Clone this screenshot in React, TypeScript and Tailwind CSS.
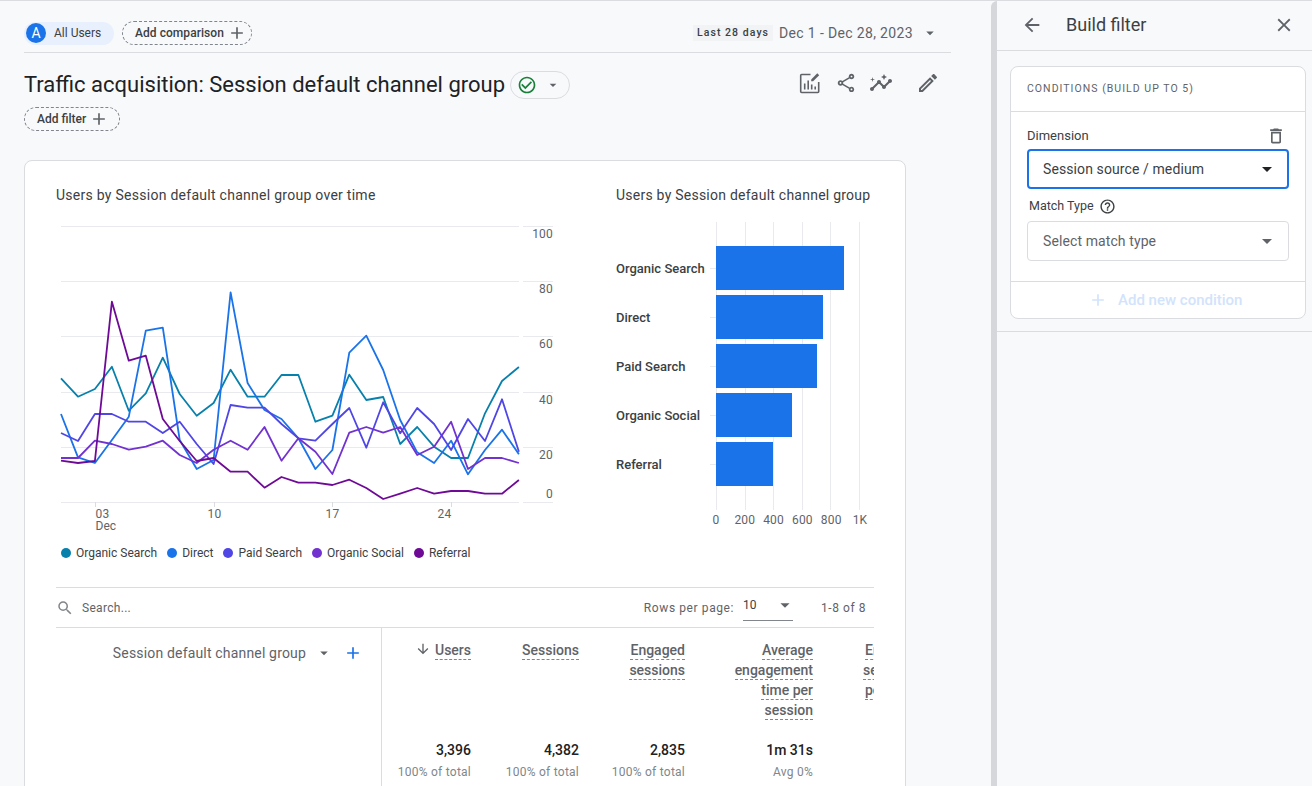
import React from "react";
import {
  MdAdd,
  MdArrowBack,
  MdArrowDownward,
  MdArrowDropDown,
  MdCheckCircleOutline,
  MdClose,
  MdDeleteOutline,
  MdHelpOutline,
  MdOutlineEdit,
  MdOutlineInsights,
  MdOutlineShare,
  MdSearch,
} from "react-icons/md";

const font = "font-['Roboto',sans-serif]";

const xAt = (i: number) => 61 + i * 16.96;
const yAt = (z: number) => 220 + z / 3;

const series = [
  {
    name: "Organic Search",
    color: "#0880ac",
    z: [475, 530, 507, 440, 572, 520, 413, 522, 587, 549, 449, 530, 530, 465, 465, 605, 587, 464, 540, 531, 672, 621, 680, 714, 714, 580, 483, 441],
  },
  {
    name: "Direct",
    color: "#1a73e8",
    z: [582, 712, 729, 660, 590, 332, 323, 660, 747, 720, 217, 489, 570, 597, 655, 747, 690, 398, 347, 450, 600, 697, 729, 662, 763, 690, 629, 703],
  },
  {
    name: "Paid Search",
    color: "#4f46e5",
    z: [639, 663, 582, 582, 605, 605, 639, 605, 672, 732, 555, 563, 563, 612, 655, 662, 612, 564, 683, 547, 640, 564, 612, 690, 597, 663, 538, 695],
  },
  {
    name: "Organic Social",
    color: "#7232cf",
    z: [714, 714, 662, 672, 689, 680, 662, 705, 729, 689, 662, 689, 621, 722, 655, 695, 762, 638, 621, 638, 621, 705, 680, 605, 747, 714, 714, 729],
  },
  {
    name: "Referral",
    color: "#6f0a96",
    z: [722, 729, 723, 245, 422, 407, 597, 663, 723, 714, 755, 755, 803, 771, 788, 788, 795, 779, 804, 837, 821, 804, 821, 813, 813, 821, 821, 780],
  },
];

const gridYs = [226, 281, 336, 392, 447, 502];
const yLabels = ["100", "80", "60", "40", "20", "0"];
const yLabelYs = [238, 293, 348, 404, 459, 498];
const ticks = [
  { x: 95.5, label: "03", anchor: "start" },
  { x: 214.5, label: "10", anchor: "middle" },
  { x: 332.5, label: "17", anchor: "middle" },
  { x: 451.5, label: "24", anchor: "end" },
];

const LineChart = () => (
  <svg width="520" height="310" viewBox="56 222 520 310" className="block">
    {gridYs.map((y) => (
      <g key={y}>
        <line x1="61" x2="519" y1={y + 0.5} y2={y + 0.5} stroke="#e8eaed" />
        <line x1="523" x2="553" y1={y + 0.5} y2={y + 0.5} stroke="#e8eaed" />
      </g>
    ))}
    {ticks.map((t) => (
      <g key={t.label}>
        <line x1={t.x} x2={t.x} y1="502" y2="507" stroke="#dadce0" />
        <text x={t.x} y="518" fontSize="12" textAnchor={t.anchor as "start"} fill="#5f6368" fontFamily="Roboto" letterSpacing="0.2">
          {t.label}
        </text>
      </g>
    ))}
    <text x="95.5" y="530" fontSize="12" fill="#5f6368" fontFamily="Roboto">
      Dec
    </text>
    {yLabels.map((l, i) => (
      <text key={l} x="553" y={yLabelYs[i]} fontSize="12" textAnchor="end" fill="#5f6368" fontFamily="Roboto" letterSpacing="0.2">
        {l}
      </text>
    ))}
    {series.map((s) => (
      <polyline
        key={s.name}
        fill="none"
        stroke={s.color}
        strokeWidth="1.8"
        strokeLinejoin="round"
        points={s.z.map((v, i) => `${xAt(i).toFixed(1)},${yAt(v).toFixed(1)}`).join(" ")}
      />
    ))}
  </svg>
);

const bars = [
  { label: "Organic Search", w: 128 },
  { label: "Direct", w: 107 },
  { label: "Paid Search", w: 101 },
  { label: "Organic Social", w: 76 },
  { label: "Referral", w: 57 },
];

const BarChart = () => (
  <div className="relative mt-[17px] h-[306px] w-[254px]">
    <div className="absolute left-[100px] top-0 flex h-[288px] w-[144px] justify-between">
      {[0, 1, 2, 3, 4, 5].map((i) => (
        <div key={i} className="w-px bg-[#e8eaed]" />
      ))}
    </div>
    <div className="absolute inset-x-0 top-[24px] flex flex-col gap-[5px]">
      {bars.map((b) => (
        <div key={b.label} className="flex h-[44px] items-center">
          <span className="mt-[1px] w-[94px] whitespace-nowrap text-[13px] font-medium leading-4 text-[#3c4043]">{b.label}</span>
          <span className="h-px w-[6px] bg-[#e8eaed]" />
          <div className="h-full bg-[#1a73e8]" style={{ width: b.w }} />
        </div>
      ))}
    </div>
    <div className="absolute bottom-0 left-[92px] flex w-[160px] justify-between text-xs leading-4 tracking-[0.2px] text-[#5f6368]">
      {["0", "200", "400", "600", "800", "1K"].map((l) => (
        <span key={l} className="flex w-[16px] justify-center whitespace-nowrap">
          {l}
        </span>
      ))}
    </div>
  </div>
);

const Dashed = ({ children }: { children: React.ReactNode }) => (
  <span className="inline-block self-start border-b border-dashed border-[#80868b] leading-[18px]">{children}</span>
);

const columns = [
  { lines: ["Sessions"], total: "4,382", sub: "100% of total", w: "w-[108px]" },
  { lines: ["Engaged", "sessions"], total: "2,835", sub: "100% of total", w: "w-[106px]" },
  { lines: ["Average", "engagement", "time per", "session"], total: "1m 31s", sub: "Avg 0%", w: "w-[128px]" },
];

const ReportIcon = () => (
  <svg width="22" height="22" viewBox="0 0 22 22" fill="none" stroke="#5f6368" strokeWidth="1.6">
    <path d="M11.5 2.5H2.6a.9.9 0 0 0-.9.9v16.2c0 .5.4.9.9.9h16.2c.5 0 .9-.4.9-.9V10" />
    <path d="M5.7 17.5v-6M9.2 17.5v-9M12.7 17.5v-5M16.2 17.5v-3" />
    <path d="M12.2 9.2V7.4L18.3 1.3l1.9 1.9-6.1 6z" fill="#5f6368" stroke="none" />
  </svg>
);

export default function App() {
  return (
    <div className={`flex h-[786px] w-[1312px] overflow-hidden border-t border-[#dadce0] bg-[#f8f9fb] ${font}`}>
      <main className="w-[991px] shrink-0 pl-6">
        <div className="mr-[40px] flex h-[52px] items-center border-b border-[#dadce0] pt-[13px]">
          <div className="flex h-[23px] w-[90px] items-center gap-2 rounded-full bg-[#e8f0fe] pl-[2px]">
            <span className="flex size-5 items-center justify-center rounded-full bg-[#1a73e8] text-sm text-white">A</span>
            <span className="text-xs text-[#3c4043]">All Users</span>
          </div>
          <button className="ml-2 flex h-6 w-[130px] items-center gap-[3px] rounded-full border border-dashed border-[#80868b] pl-[12px] text-xs font-medium tracking-[0.05px] text-[#3c4043]">
            Add comparison
            <MdAdd size={20} className="text-[#5f6368]" />
          </button>
          <div className="ml-auto flex items-center">
            <span className="bg-[#f1f3f4] px-1 text-[10.5px] font-medium leading-4 tracking-[1.05px] text-[#3c4043]">Last 28 days</span>
            <span className="ml-[6px] text-sm tracking-[0.35px] text-[#5f6368]">Dec 1 - Dec 28, 2023</span>
            <MdArrowDropDown size={18} className="ml-[8px] mr-[12px] text-[#5f6368]" />
          </div>
        </div>

        <div className="mr-[40px] flex h-[54px] items-start pt-[18px]">
          <h1 className="text-[22px] font-normal leading-7 text-[#202124]">Traffic acquisition: Session default channel group</h1>
          <div className="ml-[5px] flex h-[28px] w-[60px] items-center justify-center gap-[8px] rounded-full border border-[#dadce0] pr-[3px]">
            <MdCheckCircleOutline size={20} className="text-[#188038]" />
            <MdArrowDropDown size={16} className="text-[#5f6368]" />
          </div>
          <div className="ml-auto flex items-center text-[#5f6368]">
            <ReportIcon />
            <MdOutlineShare size={22} className="ml-[14px]" />
            <MdOutlineInsights size={24} className="ml-[12px]" />
            <MdOutlineEdit size={24} className="ml-[23px] mr-[11px]" />
          </div>
        </div>

        <button className="flex h-6 w-[96px] items-center gap-[3px] rounded-full border border-dashed border-[#80868b] pl-[12px] text-xs font-medium text-[#3c4043]">
          Add filter
          <MdAdd size={20} className="text-[#5f6368]" />
        </button>

        <section className="mt-[29px] h-[700px] w-[882px] rounded-lg border border-[#dadce0] bg-white pl-[31px] pr-[31px] pt-[24px]">
          <div className="flex">
            <div className="w-[560px]">
              <h2 className="text-sm font-normal leading-5 tracking-[0.27px] text-[#3c4043]">Users by Session default channel group over time</h2>
              <div className="mt-[17px]">
                <LineChart />
              </div>
              <div className="ml-[5px] mt-[13px] flex items-center text-xs leading-4 text-[#3c4043]">
                {series.map((s) => (
                  <span key={s.name} className="mr-[10px] flex items-center gap-[5px]">
                    <span className="size-[10px] rounded-full" style={{ backgroundColor: s.color }} />
                    {s.name}
                  </span>
                ))}
              </div>
            </div>
            <div>
              <h2 className="whitespace-nowrap text-sm font-normal leading-5 tracking-[0.24px] text-[#3c4043]">Users by Session default channel group</h2>
              <BarChart />
            </div>
          </div>

          <div className="mt-[26px] flex h-[41px] w-[818px] items-center border-y border-[#dadce0] text-xs text-[#5f6368]">
            <MdSearch size={18} className="text-[#80868b]" />
            <span className="ml-[8px] mt-[1px] tracking-[0.3px]">Search...</span>
            <span className="ml-auto tracking-[0.6px]">Rows per page:</span>
            <div className="ml-[9px] flex h-[26px] w-[50px] items-center justify-between border-b border-[#80868b] pb-[5px] text-[#3c4043]">
              10
              <MdArrowDropDown size={22} className="-mr-[3px] text-[#5f6368]" />
            </div>
            <span className="ml-[28px] mr-2 tracking-[0.55px]">1-8 of 8</span>
          </div>

          <div className="flex h-[200px] w-[818px] overflow-hidden">
            <div className="flex h-full w-[326px] shrink-0 items-start justify-end border-r border-[#dadce0] pr-[18px] pt-[15px] text-[#5f6368]">
              <span className="text-sm tracking-[0.17px]">Session default channel group</span>
              <MdArrowDropDown size={18} className="ml-[9px] mt-[1px]" />
              <MdAdd size={20} className="ml-[10px] text-[#1a73e8]" />
            </div>
            <div className="w-[89px] shrink-0 text-right">
              <div className="flex h-[112px] items-start justify-end pt-[13px] text-sm font-medium text-[#5f6368]">
                <MdArrowDownward size={16} className="mr-[4px]" />
                <Dashed>Users</Dashed>
              </div>
              <div className="text-sm font-medium leading-5 text-[#202124]">3,396</div>
              <div className="mt-[2px] whitespace-nowrap text-xs leading-5 tracking-[0.25px] text-[#80868b]">100% of total</div>
            </div>
            {columns.map((c) => (
              <div key={c.total} className={`${c.w} shrink-0 text-right`}>
                <div className="flex h-[112px] flex-col items-end pt-[12px] text-sm font-medium text-[#5f6368]">
                  {c.lines.map((l) => (
                    <div key={l} className="h-5">
                      <Dashed>{l}</Dashed>
                    </div>
                  ))}
                </div>
                <div className="text-sm font-medium leading-5 text-[#202124]">{c.total}</div>
                <div className="mt-[2px] whitespace-nowrap text-xs leading-5 tracking-[0.25px] text-[#80868b]">{c.sub}</div>
              </div>
            ))}
            <div className="ml-[50px] w-[11px] shrink-0 overflow-hidden">
              <div className="flex flex-col pt-[12px] text-sm font-medium text-[#5f6368]">
                <div className="h-5 whitespace-nowrap pl-[2px]">
                  <Dashed>Engaged</Dashed>
                </div>
                <div className="h-5 whitespace-nowrap">
                  <Dashed>sessions</Dashed>
                </div>
                <div className="h-5 whitespace-nowrap pl-[2px]">
                  <Dashed>per user</Dashed>
                </div>
              </div>
            </div>
          </div>
        </section>
      </main>

      <div className="w-[6px] shrink-0 rounded-tl-md bg-[#d5d7db]" />

      <aside className="flex-1">
        <header className="flex h-[50px] items-center border-b border-[#dadce0] pb-[2px] pl-[24px] pr-[17px]">
          <MdArrowBack size={22} className="text-[#5f6368]" />
          <h2 className="ml-[23px] text-lg font-normal text-[#3c4043]">Build filter</h2>
          <MdClose size={22} className="ml-auto text-[#5f6368]" />
        </header>
        <div className="h-[281px] border-b border-[#dadce0] pl-[13px] pr-[6px] pt-[15px]">
          <div className="h-[253px] rounded-lg border border-[#dadce0] bg-white">
            <div className="flex h-[45px] items-center border-b border-[#dadce0] pl-4 text-[10.5px] tracking-[1.03px] text-[#5f6368]">CONDITIONS (BUILD UP TO 5)</div>
            <div className="h-[170px] border-b border-[#dadce0] pl-4 pr-4 pt-[14px]">
              <div className="flex h-[20px] items-center justify-between text-[13px] text-[#3c4043]">
                Dimension
                <MdDeleteOutline size={20} className="mr-[3px] text-[#5f6368]" />
              </div>
              <div className="mt-[3px] flex h-[40px] items-center justify-between rounded border-2 border-[#1a73e8] pl-[14px] pr-[8px] text-sm tracking-[0.1px] text-[#3c4043]">
                Session source / medium
                <MdArrowDropDown size={24} className="text-[#202124]" />
              </div>
              <div className="ml-[2px] mt-[7px] flex h-5 items-center gap-[5px] text-[12.5px] text-[#3c4043]">
                Match Type
                <MdHelpOutline size={17} />
              </div>
              <div className="mt-[5px] flex h-[40px] items-center justify-between rounded border border-[#dadce0] pl-[15px] pr-[9px] text-sm tracking-[0.1px] text-[#5f6368]">
                Select match type
                <MdArrowDropDown size={24} className="text-[#5f6368]" />
              </div>
            </div>
            <div className="flex h-[36px] items-center gap-[10px] pl-[77px] text-[15px] font-medium text-[#d2e3fc]">
              <MdAdd size={20} />
              Add new condition
            </div>
          </div>
        </div>
      </aside>
    </div>
  );
}
